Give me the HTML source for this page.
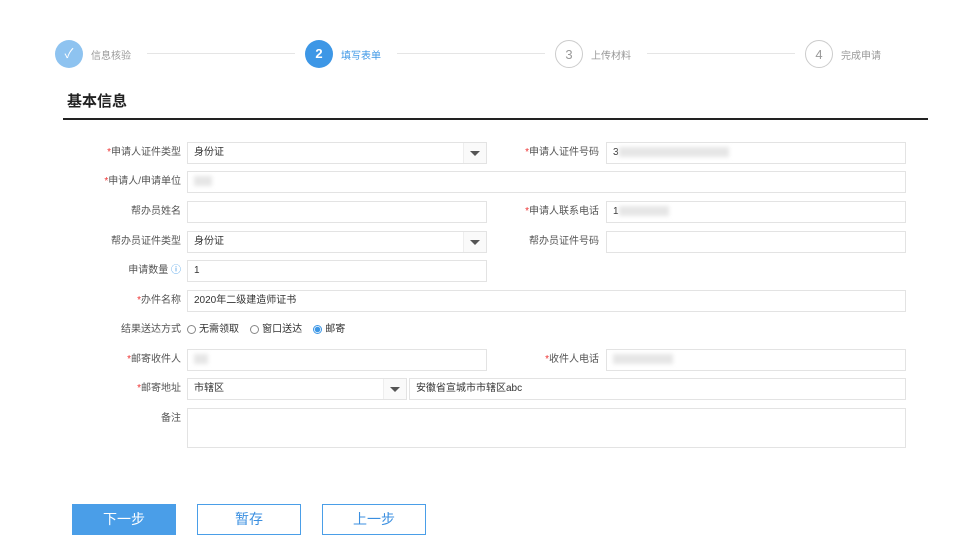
<!DOCTYPE html><html><head><meta charset="utf-8"><style>
body{margin:0;width:980px;height:540px;background:#fff;font-family:"Liberation Sans","Noto Sans CJK SC",sans-serif;position:relative;overflow:hidden}
.a{position:absolute}
.c{position:absolute;width:28px;height:28px;border-radius:50%;top:40px;font-size:13px;line-height:28px;text-align:center;box-sizing:border-box}
.sl{position:absolute;top:47px;font-size:10px;color:#999}
.ln{position:absolute;top:53px;height:1px;background:#e5e5e5}
.lb{position:absolute;font-size:10px;color:#555;text-align:right;width:170px;line-height:22px}
.lb i{color:#e33;font-style:normal}
.in{position:absolute;height:22px;border:1px solid #e3e3e3;box-sizing:border-box;font-size:10px;color:#333;line-height:20px;padding-left:6px}
.ar{position:absolute;right:0;top:0;width:22px;height:20px;border-left:1px solid #eee;background:#fafafa}
.ar:after{content:"";position:absolute;left:6px;top:8px;border:5px solid transparent;border-top:5px solid #555;border-bottom:0}
.bl{display:inline-block;width:44px;height:10px;background:#e6e6e6;vertical-align:middle;filter:blur(2px)}
.btn{position:absolute;top:504px;width:104px;height:31px;box-sizing:border-box;font-size:14px;line-height:29px;text-align:center;border:1px solid #4a9ee8;color:#3b8fe0}
.r{display:inline-block;width:9px;height:9px;border:1px solid #888;border-radius:50%;vertical-align:-2px;margin-right:3px;box-sizing:border-box}
</style></head><body>
<div class="c" style="left:55px;background:#8ec3f0;color:#fff">✓</div><div class="sl" style="left:91px">信息核验</div>
<div class="ln" style="left:147px;width:148px"></div>
<div class="c" style="left:305px;background:#3d97e6;color:#fff;font-weight:bold">2</div><div class="sl" style="left:341px;color:#3d97e6">填写表单</div>
<div class="ln" style="left:397px;width:148px"></div>
<div class="c" style="left:555px;border:1px solid #ccc;color:#999">3</div><div class="sl" style="left:591px">上传材料</div>
<div class="ln" style="left:647px;width:148px"></div>
<div class="c" style="left:805px;border:1px solid #ccc;color:#999">4</div><div class="sl" style="left:841px">完成申请</div>
<div class="a" style="left:67px;top:90px;font-size:15px;font-weight:bold;color:#222">基本信息</div>
<div class="a" style="left:63px;top:118px;width:865px;height:2px;background:#222"></div>

<div class="lb" style="left:11px;top:142px"><i>*</i>申请人证件类型</div><div class="in" style="left:187px;top:142px;width:300px">身份证<div class="ar"></div></div>
<div class="lb" style="left:429px;top:142px"><i>*</i>申请人证件号码</div><div class="in" style="left:606px;top:142px;width:300px">3<span class="bl" style="width:110px"></span></div>
<div class="lb" style="left:11px;top:171px"><i>*</i>申请人/申请单位</div><div class="in" style="left:187px;top:171px;width:719px"><span class="bl" style="width:18px"></span></div>
<div class="lb" style="left:11px;top:201px">帮办员姓名</div><div class="in" style="left:187px;top:201px;width:300px"></div>
<div class="lb" style="left:429px;top:201px"><i>*</i>申请人联系电话</div><div class="in" style="left:606px;top:201px;width:300px">1<span class="bl" style="width:50px"></span></div>
<div class="lb" style="left:11px;top:231px">帮办员证件类型</div><div class="in" style="left:187px;top:231px;width:300px">身份证<div class="ar"></div></div>
<div class="lb" style="left:429px;top:231px">帮办员证件号码</div><div class="in" style="left:606px;top:231px;width:300px"></div>
<div class="lb" style="left:11px;top:260px">申请数量 <span style="color:#3d97e6">ⓘ</span></div><div class="in" style="left:187px;top:260px;width:300px">1</div>
<div class="lb" style="left:11px;top:290px"><i>*</i>办件名称</div><div class="in" style="left:187px;top:290px;width:719px">2020年二级建造师证书</div>
<div class="lb" style="left:11px;top:319px">结果送达方式</div>
<div class="a" style="left:187px;top:319px;font-size:10px;line-height:22px;color:#333"><span class="r"></span>无需领取&nbsp;&nbsp;&nbsp;&nbsp;<span class="r"></span>窗口送达&nbsp;&nbsp;&nbsp;&nbsp;<span class="r" style="border-color:#3d97e6;background:radial-gradient(#3d97e6 2.5px,#fff 3px)"></span>邮寄</div>
<div class="lb" style="left:11px;top:349px"><i>*</i>邮寄收件人</div><div class="in" style="left:187px;top:349px;width:300px"><span class="bl" style="width:14px"></span></div>
<div class="lb" style="left:429px;top:349px"><i>*</i>收件人电话</div><div class="in" style="left:606px;top:349px;width:300px"><span class="bl" style="width:60px"></span></div>
<div class="lb" style="left:11px;top:378px"><i>*</i>邮寄地址</div><div class="in" style="left:187px;top:378px;width:220px">市辖区<div class="ar"></div></div>
<div class="in" style="left:409px;top:378px;width:497px">安徽省宣城市市辖区abc</div>
<div class="lb" style="left:11px;top:408px">备注</div><div class="in" style="left:187px;top:408px;width:719px;height:40px"></div>

<div class="btn" style="left:72px;background:#4a9ee8;color:#fff">下一步</div>
<div class="btn" style="left:197px">暂存</div>
<div class="btn" style="left:322px">上一步</div>
</body></html>
